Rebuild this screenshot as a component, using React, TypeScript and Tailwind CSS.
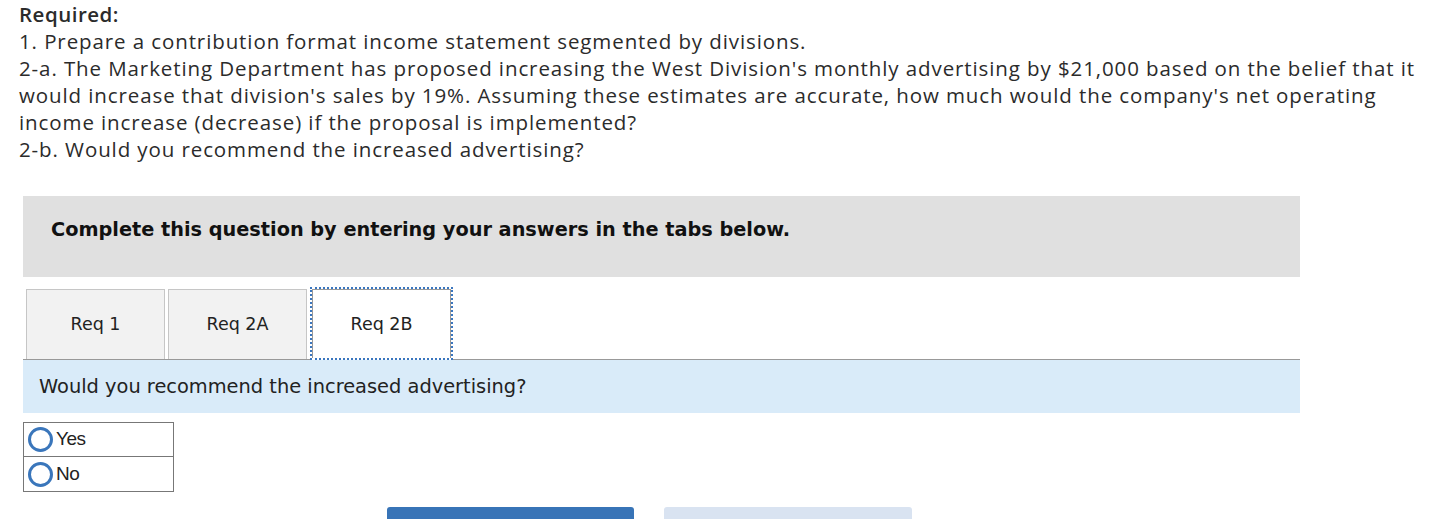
import React from 'react';

const verdana = { fontFamily: '"DejaVu Sans", Verdana, sans-serif' };

function Tab({ label, active }: { label: string; active?: boolean }) {
  if (active) {
    return (
      <div className="h-[73px] w-[143px] border-[2px] border-dotted border-[#3a76bf] -mb-[1px] relative z-10 bg-white">
        <div className="h-full w-full border border-[#999] border-b-0 flex items-center justify-center text-[17.5px] text-[#222]">
          {label}
        </div>
      </div>
    );
  }
  return (
    <div className="h-[70px] w-[139px] border border-b-0 border-[#c6c6c6] bg-[#f2f2f2] flex items-center justify-center text-[17.5px] text-[#222]">
      {label}
    </div>
  );
}

function RadioRow({ label, last }: { label: string; last?: boolean }) {
  return (
    <div className={`h-[34px] flex items-center pl-[4px] gap-[3px] ${last ? '' : 'border-b border-[#777]'}`}>
      <span className="w-[25px] h-[25px] rounded-full border-[3px] border-[#3a76bb] bg-white shrink-0" />
      <span className="text-[19px] text-[#222] tracking-[-0.5px]" style={{ fontFamily: '"Liberation Sans", Arial, sans-serif' }}>
        {label}
      </span>
    </div>
  );
}

export default function App() {
  return (
    <div className="w-[1447px] h-[519px] overflow-hidden bg-white">
      <div
        className="pl-[19px] pt-[1px] text-[20.5px] leading-[27px] text-[#2b2b2b] whitespace-nowrap tracking-[0.9px]"
        style={{ fontFamily: '"Open Sans", Lato, sans-serif' }}
      >
        <p className="font-semibold tracking-[0.5px]">Required:</p>
        <p>1. Prepare a contribution format income statement segmented by divisions.</p>
        <p>
          2-a. The Marketing Department has proposed increasing the West Division's monthly advertising by $21,000 based on the belief that it
          <br />
          would increase that division's sales by 19%. Assuming these estimates are accurate, how much would the company's net operating
          <br />
          income increase (decrease) if the proposal is implemented?
        </p>
        <p>2-b. Would you recommend the increased advertising?</p>
      </div>

      <div className="mt-[33px] ml-[23px] w-[1277px]" style={verdana}>
        <div className="h-[81px] bg-[#e0e0e0] pl-[28px] pt-[20px] text-[19.3px] font-bold text-[#111]">
          Complete this question by entering your answers in the tabs below.
        </div>

        <div className="mt-[10px] pl-[3px] flex items-end gap-[3px]">
          <Tab label="Req 1" />
          <Tab label="Req 2A" />
          <Tab label="Req 2B" active />
        </div>
        <div className="h-[1px] bg-[#999]" />
        <div className="h-[53px] bg-[#d9ebf9] pl-[16px] flex items-center text-[19.4px] text-[#222]">
          Would you recommend the increased advertising?
        </div>

        <div className="mt-[9px] w-[151px] border border-[#777]">
          <RadioRow label="Yes" />
          <RadioRow label="No" last />
        </div>

        <div className="mt-[15px] flex gap-[30px] pl-[364px]">
          <div className="w-[247px] h-[14px] rounded-t-[3px] bg-[#3874b7]" />
          <div className="w-[248px] h-[14px] rounded-t-[3px] bg-[#d9e3f1]" />
        </div>
      </div>
    </div>
  );
}
